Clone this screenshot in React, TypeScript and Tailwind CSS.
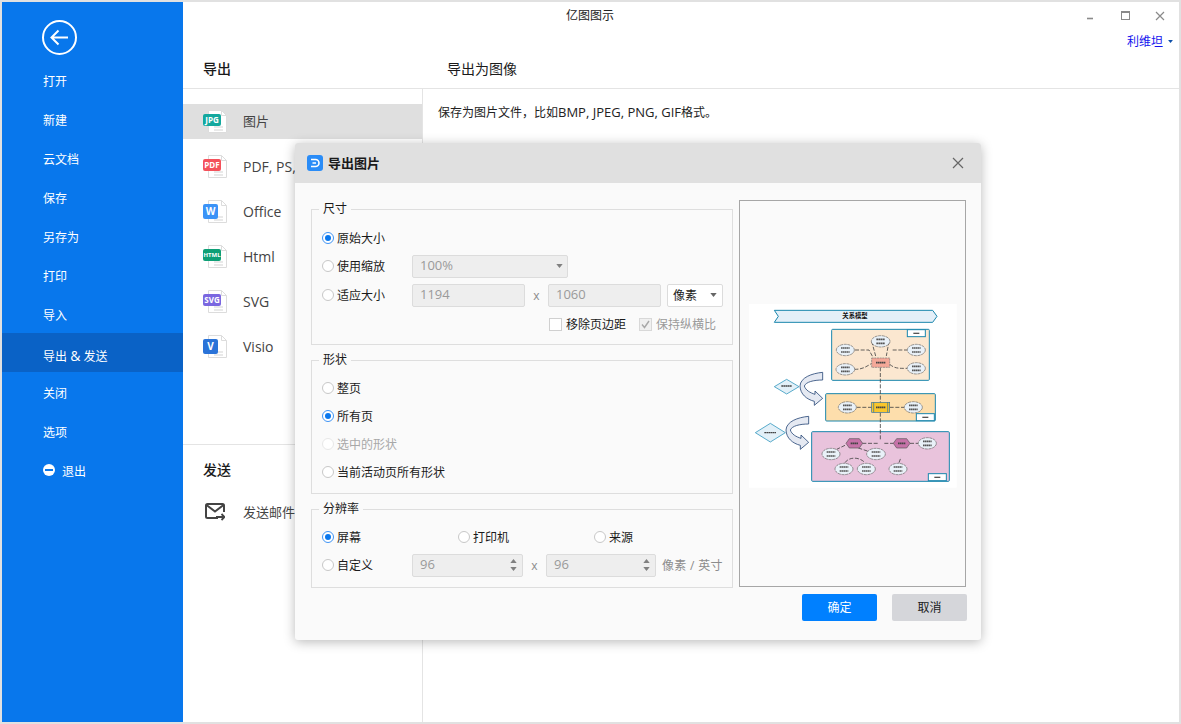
import type { ReactNode } from "react";

const navItems = ["打开", "新建", "云文档", "保存", "另存为", "打印", "导入", "导出 & 发送", "关闭", "选项"];

const exportTypes = [
  { label: "图片", badge: "JPG", color: "bg-[#13a89e]", active: true },
  { label: "PDF, PS, EPS", badge: "PDF", color: "bg-[#f4515b]" },
  { label: "Office", badge: "W", color: "bg-[#3b93f7]" },
  { label: "Html", badge: "HTML", color: "bg-[#0e9f76]" },
  { label: "SVG", badge: "SVG", color: "bg-[#7a67e0]" },
  { label: "Visio", badge: "V", color: "bg-[#2a73d8]" },
];

function Caret({ className = "", up = false }: { className?: string; up?: boolean }) {
  return (
    <svg width="7" height="4" viewBox="0 0 8 5" className={className}>
      <path d={up ? "M0 5 L4 0 L8 5 Z" : "M0 0 L8 0 L4 5 Z"} fill="currentColor" />
    </svg>
  );
}

function FileIcon({ badge, color }: { badge: string; color: string }) {
  const square = badge.length === 1;
  return (
    <div className="relative w-[24px] h-[24px] shrink-0">
      <svg width="19" height="23" viewBox="0 0 19 23" className="absolute left-[5px] top-0">
        <path d="M0.5 0.5 H13.5 L18.5 5.5 V22.5 H0.5 Z" fill="#fff" stroke="#dcdcdc" />
        <path d="M13.5 0.5 V5.5 H18.5" fill="none" stroke="#dcdcdc" />
        <path d="M6 17 H15 M6 20 H15" stroke="#e2e2e2" strokeWidth="1.5" />
      </svg>
      <span className={`absolute left-0 top-[4px] rounded-[2px] flex items-center justify-center text-white font-bold leading-none ${color} ${square ? "w-[15px] h-[15px] text-[10px]" : "w-[18px] h-[12px]"} ${badge === "HTML" ? "text-[6px]" : square ? "" : "text-[8px]"}`}>
        {badge}
      </span>
    </div>
  );
}

function Radio({ label, checked = false, disabled = false }: { label: string; checked?: boolean; disabled?: boolean }) {
  return (
    <div className={`flex items-center gap-[3px] text-[12px] ${disabled ? "text-[#a8a8a8]" : "text-[#1a1a1a]"}`}>
      <span
        className={`w-[12px] h-[12px] rounded-full border flex items-center justify-center bg-white ${
          checked ? "border-[#3f94f5]" : disabled ? "border-[#e8e8e8]" : "border-[#c8c8c8]"
        }`}
      >
        {checked && <span className="w-[6px] h-[6px] rounded-full bg-[#0a78ee]" />}
      </span>
      <span className="translate-y-px">{label}</span>
    </div>
  );
}

function Group({ title, className, children }: { title: string; className: string; children: ReactNode }) {
  return (
    <div className={`relative border border-[#dedede] pl-[10px] ${className}`}>
      <span className="absolute left-[7px] -top-[10px] bg-[#fafafa] px-[4px] text-[12px] leading-[18px] text-[#1a1a1a]">{title}</span>
      {children}
    </div>
  );
}

function Field({ value, className, spinner = false }: { value: string; className: string; spinner?: boolean }) {
  return (
    <div className={`h-[23px] flex items-center justify-between rounded-[2px] border border-[#dcdcdc] bg-[#eeeeee] pl-[7px] pr-[5px] text-[13px] text-[#9a9a9a] ${className}`}>
      {value}
      {spinner && (
        <span className="flex flex-col gap-[4px] text-[#808080]">
          <Caret up />
          <Caret />
        </span>
      )}
    </div>
  );
}

function MapNode({ x, y, wide = false }: { x: number; y: number; wide?: boolean }) {
  return (
    <g>
      <ellipse cx={x} cy={y} rx={wide ? 28 : 27} ry="17" fill="#e9f1f8" stroke="#666" strokeWidth="2" strokeDasharray="9 2" />
      <path d={`M${x - 13} ${y - 6} H${x + 13} M${x - 13} ${y + 6} H${x + 13}`} stroke="#555" strokeWidth="5" strokeDasharray="5 1" />
    </g>
  );
}

function Tab({ x, y }: { x: number; y: number }) {
  return (
    <g>
      <rect x={x} y={y} width="54" height="21" fill="#fff" stroke="#1a86ad" strokeWidth="3" />
      <path d={`M${x + 18} ${y + 11} H${x + 36}`} stroke="#555" strokeWidth="4" />
    </g>
  );
}

function Hex({ x, y }: { x: number; y: number }) {
  return (
    <g>
      <path
        d={`M${x - 25} ${y} L${x - 15} ${y - 14} H${x + 15} L${x + 25} ${y} L${x + 15} ${y + 14} H${x - 15} Z`}
        fill="#c672a8"
        stroke="#555"
        strokeWidth="2"
      />
      <path d={`M${x - 11} ${y} H${x + 11}`} stroke="#444" strokeWidth="5" strokeDasharray="5 1" />
    </g>
  );
}

function PreviewDiagram() {
  const arrow = "M233 229 V252 C205 252 183 258 178 270 C182 283 195 290 210 295 V285 L233 307 L208 328 V316 C185 310 166 295 165 270 C166 245 200 232 233 229 Z";
  const links =
    "M330 162 H372 L384 184 M380 136 L392 180 M432 136 L424 180 M443 162 H486 M328 220 C350 220 360 215 380 202 M434 205 C450 218 460 217 486 217 M406 214 V432 M335 334 H380 M434 334 H478 M352 442 H400 M418 442 H446 M495 442 H520 M300 448 L275 460 M340 456 L370 466 M300 500 C310 484 340 480 360 500 M462 500 L468 484";
  return (
    <svg width="215" height="195" viewBox="0 0 645 585">
      <rect x="12" y="24" width="623" height="551" fill="#fff" />
      <path d="M88 43 H563 L576 61 L563 79 H88 L100 61 Z" fill="#e4eff8" stroke="#1a86ad" strokeWidth="3" />
      <text x="330" y="67" textAnchor="middle" fontSize="19" fontWeight="700" fill="#111">关系模型</text>
      <rect x="260" y="100" width="293" height="153" rx="3" fill="#fbe7d0" stroke="#1a86ad" strokeWidth="3" />
      <rect x="242" y="293" width="329" height="82" rx="3" fill="#fddeac" stroke="#1a86ad" strokeWidth="3" />
      <rect x="200" y="407" width="413" height="149" rx="3" fill="#e9c3dc" stroke="#1a86ad" strokeWidth="3" />
      <Tab x={487} y={101} />
      <Tab x={514} y={353} />
      <Tab x={550} y={533} />
      <path d={links} fill="none" stroke="#444" strokeWidth="2.5" strokeDasharray="12 5" />
      <rect x="380" y="186" width="54" height="28" fill="#f4a898" stroke="#777" strokeWidth="2" strokeDasharray="6 2" />
      <path d="M393 200 H421" stroke="#444" strokeWidth="5" strokeDasharray="5 1" />
      <rect x="380" y="319" width="54" height="30" fill="#f9c62c" stroke="#2d6ea5" strokeWidth="2" />
      <path d="M386 319 V349 M428 319 V349" stroke="#2d6ea5" strokeWidth="2" />
      <path d="M393 334 H421" stroke="#444" strokeWidth="5" strokeDasharray="5 1" />
      <MapNode x={301} y={162} />
      <MapNode x={407} y={136} wide />
      <MapNode x={514} y={162} />
      <MapNode x={301} y={220} wide />
      <MapNode x={514} y={217} />
      <MapNode x={307} y={334} />
      <MapNode x={505} y={334} />
      <Hex x={328} y={442} />
      <Hex x={470} y={442} />
      <MapNode x={547} y={442} />
      <MapNode x={258} y={474} />
      <MapNode x={393} y={474} wide />
      <MapNode x={297} y={519} />
      <MapNode x={364} y={519} />
      <MapNode x={459} y={519} />
      <path d="M88 272 L125 250 L162 272 L125 294 Z" fill="#e3f0f8" stroke="#3a9bc0" strokeWidth="2.5" />
      <path d="M109 270 H141" stroke="#444" strokeWidth="4" strokeDasharray="5 1" />
      <path d="M31 410 L76 382 L121 410 L76 438 Z" fill="#e3f0f8" stroke="#3a9bc0" strokeWidth="2.5" />
      <path d="M58 410 H94" stroke="#444" strokeWidth="4" strokeDasharray="5 1" />
      <path d={arrow} fill="#e5e9f2" stroke="#2b4a7a" strokeWidth="2.5" />
      <path d={arrow} fill="#e5e9f2" stroke="#2b4a7a" strokeWidth="2.5" transform="translate(-42 132)" />
    </svg>
  );
}

function ExportDialog() {
  return (
    <div className="absolute left-[293px] top-[141px] w-[686px] h-[497px] rounded-[3px] overflow-hidden bg-[#fafafa] shadow-[0_2px_12px_rgba(0,0,0,0.28)]">
      <div className="h-[40px] bg-[#e0e0e0] flex items-center pl-[12px] pr-[17px]">
        <svg width="16" height="16" viewBox="0 0 16 16">
          <rect width="16" height="16" rx="3" fill="#2a8cf7" />
          <path d="M4 4.5 H8.5 A3.5 3.5 0 0 1 8.5 11.5 H4 M5.5 8 H9" fill="none" stroke="#fff" strokeWidth="1.6" />
        </svg>
        <span className="ml-[5px] translate-y-px text-[13px] font-bold text-[#1a1a1a]">导出图片</span>
        <svg width="12" height="12" viewBox="0 0 12 12" className="ml-auto text-[#666]">
          <path d="M1 1 L11 11 M11 1 L1 11" stroke="currentColor" strokeWidth="1.2" />
        </svg>
      </div>
      <div className="flex pl-[16px]">
        <div className="w-[422px] pt-[26px] flex flex-col gap-[15px]">
          <Group title="尺寸" className="h-[136px] pt-[14px]">
            <div className="h-[28px] flex items-center">
              <Radio label="原始大小" checked />
            </div>
            <div className="h-[28px] flex items-center">
              <div className="w-[90px]">
                <Radio label="使用缩放" />
              </div>
              <Field value="100%" className="w-[156px]" />
              <Caret className="-ml-[12px] text-[#808080]" />
            </div>
            <div className="h-[28px] mt-px flex items-center">
              <div className="w-[90px]">
                <Radio label="适应大小" />
              </div>
              <Field value="1194" className="w-[113px]" />
              <span className="w-[23px] text-center text-[12px] text-[#8c8c8c] translate-y-px">x</span>
              <Field value="1060" className="w-[113px]" />
              <div className="ml-[6px] w-[56px] h-[23px] flex items-center justify-between rounded-[2px] border border-[#dcdcdc] bg-white pl-[5px] pr-[5px] text-[12px] text-[#1a1a1a]">
                <span className="translate-y-px">像素</span>
                <Caret className="text-[#666]" />
              </div>
            </div>
            <div className="h-[28px] mt-px flex items-center pl-[227px] text-[12px]">
              <span className="w-[13px] h-[13px] border border-[#d0d0d0] bg-white" />
              <span className="ml-[4px] w-[73px] text-[#1a1a1a] translate-y-px">移除页边距</span>
              <span className="w-[13px] h-[13px] border border-[#d8d8d8] bg-[#f0f0f0] flex items-center justify-center">
                <svg width="9" height="9" viewBox="0 0 9 9">
                  <path d="M1 4.5 L3.5 7.5 L8 1" fill="none" stroke="#a8a8a8" strokeWidth="1.4" />
                </svg>
              </span>
              <span className="ml-[4px] text-[#9a9a9a] translate-y-px">保持纵横比</span>
            </div>
          </Group>
          <Group title="形状" className="h-[134px] pt-[13px]">
            <div className="h-[28px] flex items-center">
              <Radio label="整页" />
            </div>
            <div className="h-[28px] flex items-center">
              <Radio label="所有页" checked />
            </div>
            <div className="h-[28px] flex items-center">
              <Radio label="选中的形状" disabled />
            </div>
            <div className="h-[28px] flex items-center">
              <Radio label="当前活动页所有形状" />
            </div>
          </Group>
          <Group title="分辨率" className="h-[79px] pt-[13px]">
            <div className="h-[28px] flex items-center">
              <div className="w-[136px]">
                <Radio label="屏幕" checked />
              </div>
              <div className="w-[136px]">
                <Radio label="打印机" />
              </div>
              <Radio label="来源" />
            </div>
            <div className="h-[28px] flex items-center">
              <div className="w-[90px]">
                <Radio label="自定义" />
              </div>
              <Field value="96" className="w-[111px]" spinner />
              <span className="w-[23px] text-center text-[12px] text-[#8c8c8c] translate-y-px">x</span>
              <Field value="96" className="w-[110px]" spinner />
              <span className="ml-[6px] text-[12px] tracking-[0.3px] text-[#8c8c8c] whitespace-nowrap translate-y-px">像素 / 英寸</span>
            </div>
          </Group>
        </div>
        <div className="ml-[6px] pt-[17px]">
          <div className="w-[227px] h-[387px] border border-[#a6a6a6] flex items-center justify-center">
            <PreviewDiagram />
          </div>
          <div className="mt-[7px] flex gap-[15px] pl-[63px]">
            <button className="w-[75px] h-[27px] rounded-[2px] bg-[#0080ff] text-[12px] text-white">确定</button>
            <button className="w-[75px] h-[27px] rounded-[2px] bg-[#d5d6da] text-[12px] text-[#1a1a1a]">取消</button>
          </div>
        </div>
      </div>
    </div>
  );
}

export default function App() {
  return (
    <div className="relative w-[1181px] h-[724px] overflow-hidden border-2 border-[#e1e1e1] bg-white flex font-['Open_Sans','Noto_Sans_CJK_SC',sans-serif]">
      {/* Left nav */}
      <aside className="w-[181px] shrink-0 bg-[#0877ec] text-white text-[12px]">
        <div className="h-[58px] pl-[40px] pt-[18px]">
          <svg width="35" height="35" viewBox="0 0 35 35">
            <circle cx="17.5" cy="17.5" r="16.5" fill="none" stroke="#fff" strokeWidth="2" />
            <path d="M26 17.5 H10 M16.5 10.5 L9.5 17.5 L16.5 24.5" fill="none" stroke="#fff" strokeWidth="2" />
          </svg>
        </div>
        {navItems.map((item) => (
          <div key={item} className={`h-[39px] flex items-center pl-[41px] pt-[5px] ${item === "导出 & 发送" ? "bg-[#0a62c6]" : ""}`}>
            {item === "导出 & 发送" ? (
              <span>
                导出 <span className="text-[14px]">&amp;</span> 发送
              </span>
            ) : (
              item
            )}
          </div>
        ))}
        <div className="h-[39px] flex items-center pl-[41px] gap-[7px]">
          <span className="w-[12px] h-[12px] rounded-full bg-white flex items-center justify-center">
            <span className="w-[8px] h-[2px] bg-[#0877ec]" />
          </span>
          <span className="translate-y-[2px]">退出</span>
        </div>
      </aside>

      <main className="flex-1 flex flex-col">
        <header className="h-[87px] shrink-0 border-b border-[#e4e4e4] flex flex-col">
          <div className="h-[28px] flex items-center pl-[383px] pr-[8px] text-[12px] text-[#222]">
            亿图图示
            <svg width="84" height="12" viewBox="0 0 84 12" className="ml-auto text-[#8a8a8a]">
              <path d="M0 8.5 H6" stroke="currentColor" strokeWidth="1.6" />
              <rect x="34.5" y="1.5" width="8" height="8" fill="none" stroke="currentColor" />
              <path d="M34 2 H43" stroke="currentColor" strokeWidth="2" />
              <path d="M69 2 L77 10 M77 2 L69 10" stroke="currentColor" strokeWidth="1.2" />
            </svg>
          </div>
          <div className="h-[22px] flex items-center justify-end gap-[5px] pr-[6px] text-[12px] text-[#1414ee]">
            <span className="translate-y-px">利维坦</span>
            <Caret className="text-[#0d4fa8] w-[5px] h-[3px]" />
          </div>
          <div className="flex text-[14px] text-[#1a1a1a] pt-[6px]">
            <span className="w-[264px] pl-[20px] font-medium">导出</span>
            <span>导出为图像</span>
          </div>
        </header>

        <div className="flex-1 flex">
          <div className="w-[240px] shrink-0 border-r border-[#e4e4e4]">
            <div className="h-[356px] border-b border-[#e4e4e4] pt-[15px] flex flex-col gap-[10px]">
              {exportTypes.map((t) => (
                <div key={t.badge} className={`h-[35px] shrink-0 flex items-center pl-[20px] gap-[16px] text-[#444] whitespace-nowrap ${t.active ? "bg-[#dfdfdf] text-[13px]" : "text-[14px]"}`}>
                  <FileIcon badge={t.badge} color={t.color} />
                  <span>{t.label}</span>
                </div>
              ))}
            </div>
            <div className="pl-[20px] pt-[14px] text-[14px] font-medium text-[#1a1a1a]">发送</div>
            <div className="mt-[23px] pl-[22px] flex items-center gap-[18px] text-[13px] text-[#444] whitespace-nowrap">
              <svg width="20" height="18" viewBox="0 0 20 18" className="text-[#444] -translate-y-px">
                <path d="M13 15 H2.5 A1.5 1.5 0 0 1 1 13.5 V2.5 A1.5 1.5 0 0 1 2.5 1 H17.5 A1.5 1.5 0 0 1 19 2.5 V9" fill="none" stroke="currentColor" strokeWidth="2" />
                <path d="M1.5 2 L10 8.5 L18.5 2" fill="none" stroke="currentColor" strokeWidth="2" />
                <path d="M11 14 H19 M16.5 11 L19.5 14 L16.5 17" fill="none" stroke="currentColor" strokeWidth="1.8" />
              </svg>
              发送邮件
            </div>
          </div>
          <div className="flex-1 pl-[15px] pt-[13px] text-[12px] leading-[20px] text-[#222]">
            保存为图片文件，比如<span className="text-[13px]">BMP, JPEG, PNG, GIF</span>格式。
          </div>
        </div>
      </main>

      <ExportDialog />
    </div>
  );
}
